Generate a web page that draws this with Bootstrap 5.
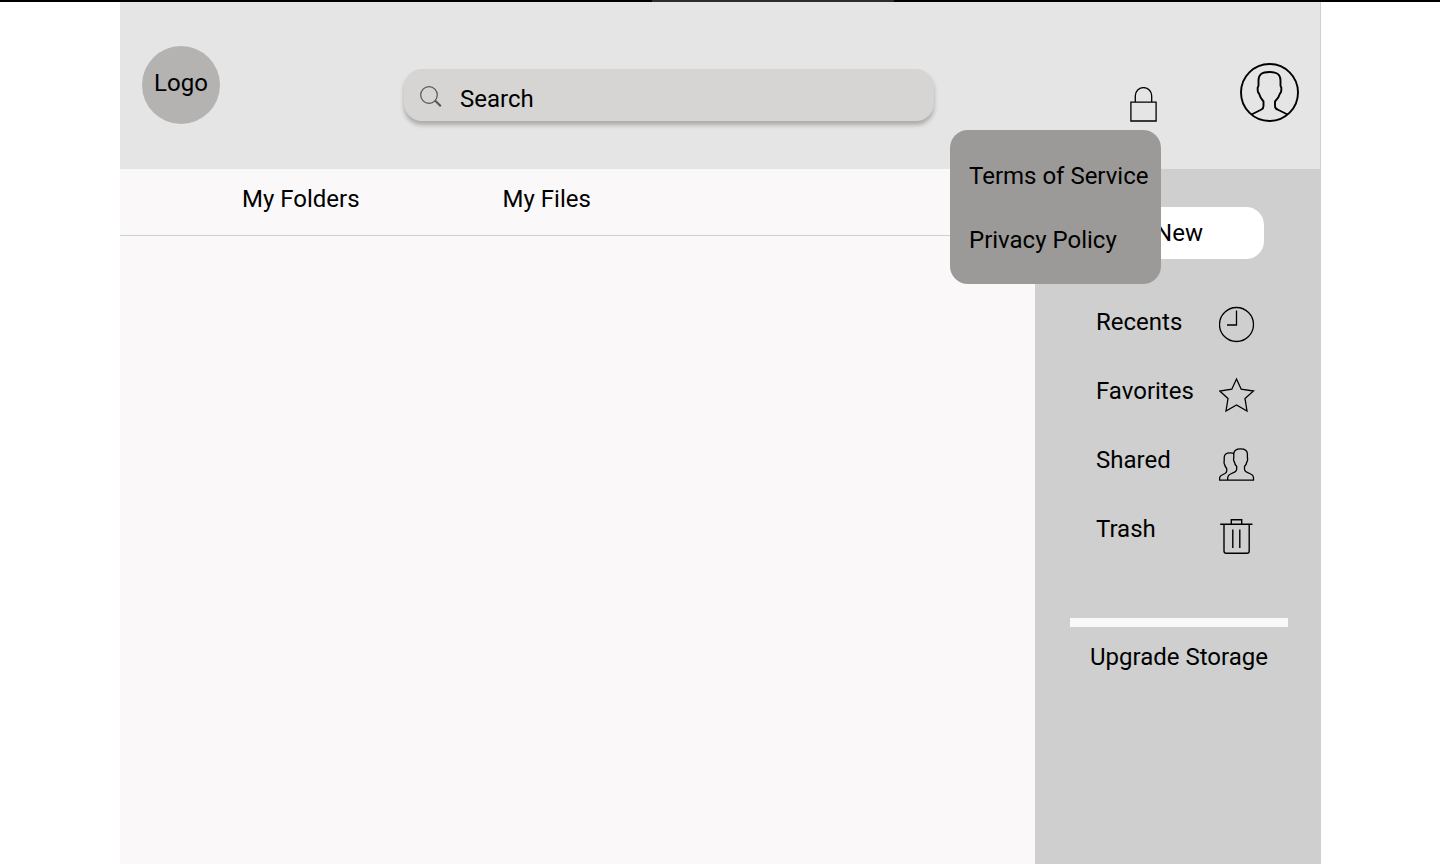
<!DOCTYPE html>
<html lang="en">
<head>
<meta charset="utf-8">
<meta name="viewport" content="width=device-width, initial-scale=1">
<title>My Files</title>
<link rel="stylesheet" href="https://cdn.jsdelivr.net/npm/bootstrap@5.3.0/dist/css/bootstrap.min.css">
<style>
  body { font-family: Roboto, sans-serif; font-size: 24px; line-height: 28px; color: #000; background: #fff; }
  a { color: #000; text-decoration: none; }
  svg { display: block; fill: none; stroke: #000; }
  .top-strip { height: 2px; background: #000; }
  .top-strip span { width: 242px; margin-left: 106px; background: #2c2c2c; }
  .app { margin: 0 119px 0 120px; }
  .app-header { height: 167px; padding: 44px 21px 0 22px; background: #e5e5e5; border-right: 1px solid #cfcfcf; }
  .logo { width: 78px; height: 78px; background: #b4b3b2; padding-bottom: 4px; }
  .search { height: 52px; margin: 23px 196px 0 184px; padding: 0 16px; gap: 18px; border-radius: 18px; background: #d6d5d3; box-shadow: 0 4px 4px rgba(0,0,0,.25); }
  .search input { padding: 8px 0 0; line-height: 28px; color: #000; }
  .search input::placeholder { color: #000; opacity: 1; }
  .lock { margin: 41px 83px 0 0; }
  .lock .dropdown-menu { top: 43px; right: -4px; width: 211px; padding: 32px 0 30px; border: 0; border-radius: 18px; background: #9b9a98; }
  .lock li + li { margin-top: 36px; }
  .lock .dropdown-item { padding: 0 0 0 19px; font-size: 24px; line-height: 28px; color: #000; }
  .avatar { margin-top: 17px; }
  .tabs { height: 67px; padding: 16px 122px 0; gap: 143px; border-bottom: 1px solid #cfcfcf; }
  .files { background: #faf8f9; }
  .side { width: 286px; padding: 38px 33px 0 35px; background: #cfcfcf; }
  .new-btn { width: 170px; height: 52px; border-radius: 18px; font-size: 24px; line-height: 28px; }
  .new-btn, .new-btn:hover { color: #000; background: #fff; }
  .side-links { margin-top: 46px; padding: 0 33px 0 26px; }
  .side-links a { height: 69px; padding-top: 3px; }
  .side-links svg { margin-top: -3px; }
  .storage { height: 9px; margin-top: 37px; border-radius: 0; background: #faf8f9; }
  .upgrade { margin-top: 16px; }
</style>
</head>
<body class="d-flex flex-column min-vh-100">
<div class="top-strip d-flex justify-content-center"><span></span></div>
<div class="app d-flex flex-column flex-grow-1">
  <header class="app-header d-flex align-items-start">
    <a href="#" class="logo rounded-circle d-flex align-items-center justify-content-center flex-shrink-0">Logo</a>
    <form class="search d-flex align-items-center flex-grow-1" role="search">
      <svg class="flex-shrink-0" width="22" height="28" viewBox="0 0 22 28" style="stroke:#50545a"><circle cx="9" cy="14" r="8.300" stroke-width="1.200"/><path d="M15 19.500 20.800 25.300" stroke-width="2"/></svg>
      <input class="w-100 border-0 bg-transparent" type="search" placeholder="Search" aria-label="Search">
    </form>
    <div class="lock dropdown flex-shrink-0">
      <button class="btn p-0 border-0 d-block" type="button" aria-label="Privacy menu" aria-expanded="true">
        <svg width="27" height="36" viewBox="0 0 27 36" stroke-width="1.300"><path d="M.9 15.200h25.200v18.800H.9zM5.300 15V8.800a8.200 8.200 0 0 1 16.400 0V15"/></svg>
      </button>
      <ul class="dropdown-menu show m-0">
        <li><a class="dropdown-item" href="#">Terms of Service</a></li>
        <li><a class="dropdown-item" href="#">Privacy Policy</a></li>
      </ul>
    </div>
    <button class="avatar btn p-0 border-0 flex-shrink-0" type="button" aria-label="Account">
      <svg width="59" height="59" viewBox="0 0 59 59" stroke-width="1.900" stroke-linejoin="round"><circle cx="29.500" cy="29.500" r="28.500"/><path d="M11.500 51.500 21.500 46.500Q23.500 45.500 23.500 43V38.500Q20 34.500 18.900 30.300Q17.400 29.500 17.700 24.500Q18.700 23.500 18.500 21V17.500C18.500 11.500 21.500 9 29.500 9S40.500 11.500 40.500 17.500V21Q40.300 23.500 41.300 24.500Q41.600 29.500 40.100 30.300Q39 34.500 35 38.500V43Q35 45.500 37.500 46.500L47.500 51.500"/></svg>
    </button>
  </header>
  <div class="d-flex flex-grow-1">
    <main class="files flex-grow-1">
      <nav class="tabs d-flex align-items-start"><a href="#">My Folders</a><a href="#">My Files</a></nav>
    </main>
    <aside class="side flex-shrink-0">
      <button class="new-btn btn border-0 d-block mx-auto p-0" type="button">New</button>
      <nav class="side-links">
        <a href="#" class="d-flex justify-content-between align-items-start">Recents
          <svg width="36" height="44" viewBox="0 0 36 44" stroke-width="1.300"><circle cx="17.500" cy="19.500" r="17"/><path d="M17.500 5.500V20H8"/></svg></a>
        <a href="#" class="d-flex justify-content-between align-items-start">Favorites
          <svg width="36" height="44" viewBox="0 0 36 44" stroke-width="1.300"><path d="M17.500 5 22.200 15.200 34.500 17 26 24.500 28 37 17.500 31 7 37 9 24.500.8 17 12.800 15.200z"/></svg></a>
        <a href="#" class="d-flex justify-content-between align-items-start">Shared
          <svg width="36" height="44" viewBox="0 0 36 44" stroke-width="1.300" stroke-linejoin="round"><path d="M8.700 37.200V34.500Q9 32 11.500 31L16 28.800Q17.700 28 17.700 26V23.500Q15.800 21.500 15.200 18.500Q14.200 17.500 14.800 14.500V11C14.800 7.500 17 5.800 21.600 5.800S28.400 7.500 28.400 11V14.500Q29 17.500 28 18.500Q27.400 21.500 25.500 23.500V26Q25.500 28 27.200 28.800L31.700 31Q34.300 32 34.500 34.500V37.200zM8.700 37.200H.6V35Q.8 33 3 32L6 30.500Q7.700 29.500 7.700 28V25.500Q6 23.500 5.600 21.500Q4.700 20.500 5.200 18V14.500C5.200 11.500 7.500 9.800 11 9.800Q13.500 9.800 15 10.500"/></svg></a>
        <a href="#" class="d-flex justify-content-between align-items-start">Trash
          <svg width="36" height="44" viewBox="0 0 36 44" stroke-width="1.400"><path d="M1.200 12.200H33.500M12.300 12V7.700H22.700V12M5 12.500V39Q5 41.200 7.200 41.200H28Q30.200 41.200 30.200 39V12.500M13.800 17.500V36M20.800 17.500V36"/></svg></a>
      </nav>
      <div class="storage progress" role="progressbar" aria-label="Storage used" aria-valuenow="0" aria-valuemin="0" aria-valuemax="100"></div>
      <a href="#" class="upgrade d-block text-center text-nowrap">Upgrade Storage</a>
    </aside>
  </div>
</div>
<script src="https://cdn.jsdelivr.net/npm/bootstrap@5.3.0/dist/js/bootstrap.bundle.min.js"></script>
</body>
</html>
